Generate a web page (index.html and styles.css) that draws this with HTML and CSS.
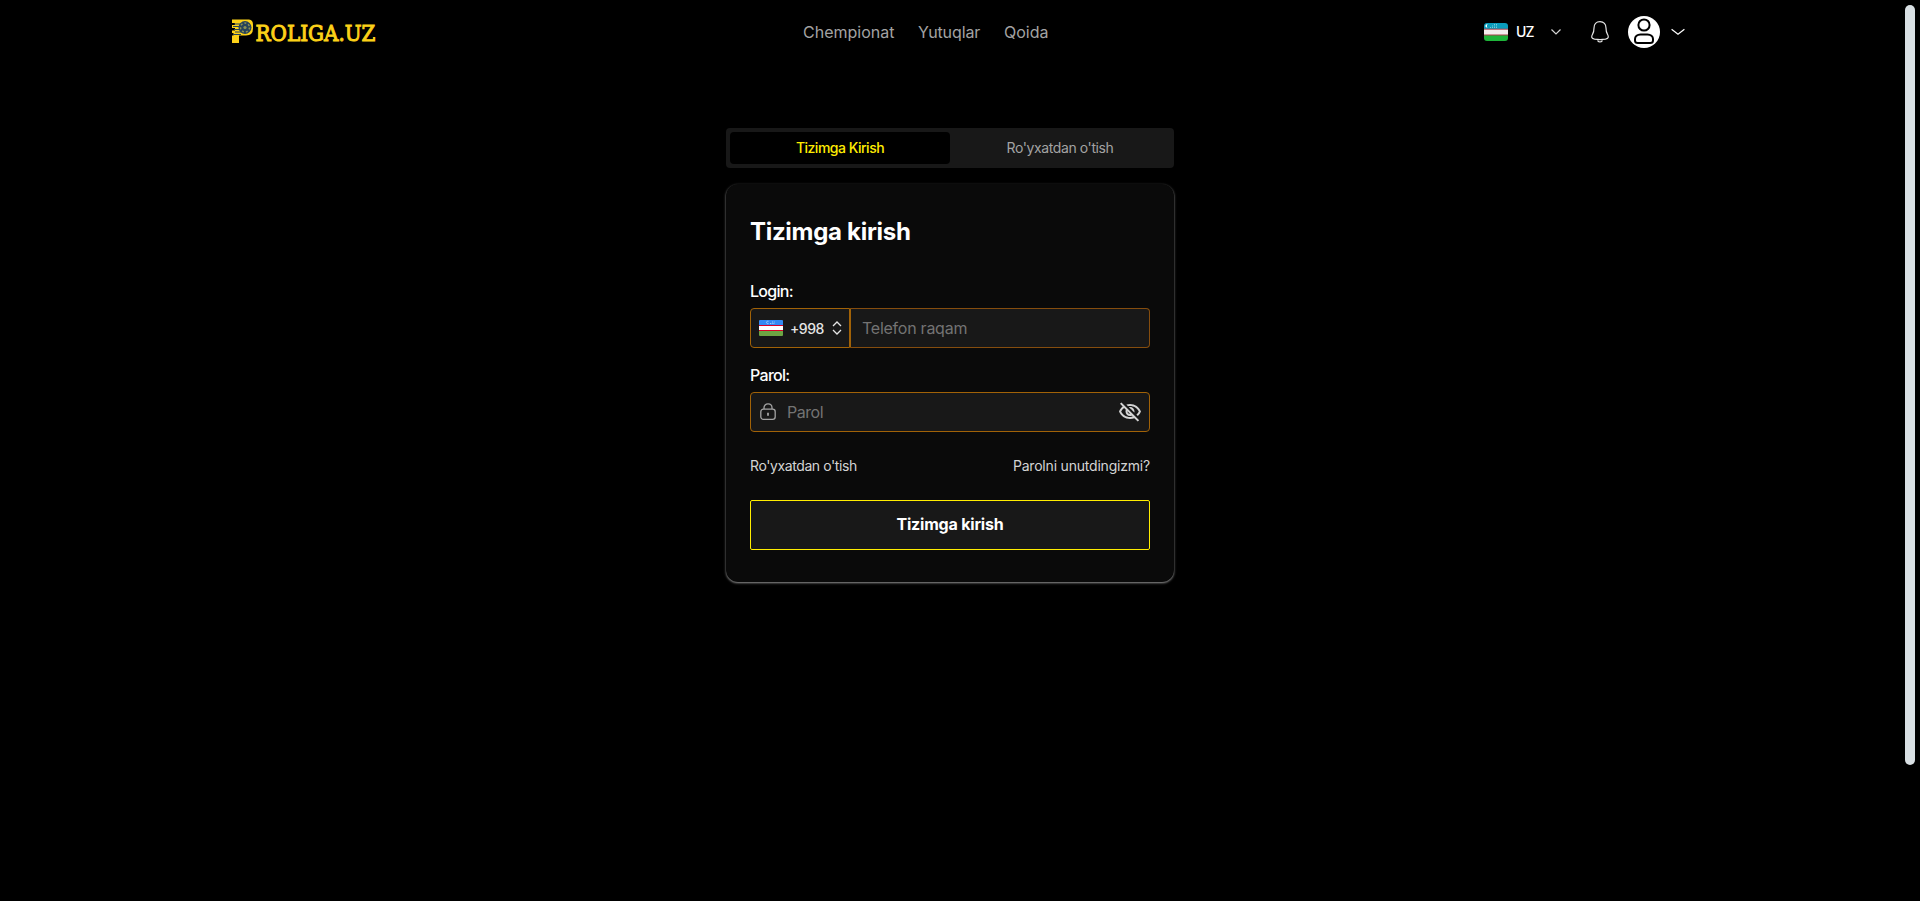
FILE: index.html
```html
<!DOCTYPE html>
<html lang="uz">
<head>
<meta charset="utf-8">
<title>Proliga.uz</title>
<link rel="stylesheet" href="styles.css">
</head>
<body>
<header class="header">
  <a class="brand">
    <svg width="170" height="46" viewBox="0 -10 170 46">
      <path d="M0 .5h17q4 .5 4 5v4q0 7-7 7H7V24H0v-7.500h1.500V14H0v-2.500h3V9H0V6h3V4H0Z" fill="#fcd118"/>
      <path d="M2 5h8M1 7.500h6M2 10.500h6M3 13h8M1 15.500h8" stroke="#26435a" stroke-width="1"/>
      <circle cx="13" cy="8.500" r="6.500" fill="#26435a"/>
      <circle cx="13" cy="8.500" r="4.500" fill="none" stroke="#8c9150" stroke-width="1.500" stroke-dasharray="2 2"/>
      <circle cx="13" cy="8.500" r="1.600" fill="#8c9150"/>
      <text class="brand-text" x="23.500" y="22.300" textLength="120" lengthAdjust="spacingAndGlyphs">ROLIGA.UZ</text>
    </svg>
  </a>
  <nav class="nav"><a class="n1">Chempionat</a><a class="n2">Yutuqlar</a><a class="n3">Qoida</a></nav>
  <div class="tools">
    <svg class="flag" width="24" height="18" viewBox="0 0 24 18">
      <path d="M0 0h24v6H0Z" fill="#0a9cbb"/><path d="M0 6h24v6.500H0Z" fill="#f4eeee"/><path d="M0 12h24v6H0Z" fill="#1eb53a"/>
      <path d="M0 6.200h24M0 12h24" stroke="#a8404a" stroke-width="1"/>
      <path d="M3.700 1.300a1.700 1.700 0 1 0 0 3.200 2 2 0 0 1 0-3.200Z" fill="#fff"/>
      <path d="M6 4.500h8M8 3h6M10 1.500h4" stroke="#8fd5e2" stroke-width=".8" stroke-dasharray="1 1"/>
    </svg>
    <span class="lang">UZ</span>
    <svg class="chev" width="10" height="6" viewBox="0 0 10 6"><path d="M.5.500l4.500 4.500L9.500.500"/></svg>
    <svg class="bell" width="20" height="24" viewBox="0 0 20 24"><path d="M10 1.700c-3.800 0-6 2.500-6 6.300 0 3.500-.4 4.600-1.500 6.300C1 17 1.500 18.700 4.500 19.200q5.500.7 11 0c3-.5 3.500-2.200 2-4.900C16.400 12.600 16 11.500 16 8c0-3.800-2.200-6.300-6-6.300Z"/><path d="M7.500 20.500q2.500 3 5 0"/></svg>
    <svg class="avatar" width="32" height="32" viewBox="0 0 32 32"><circle class="disc" cx="16" cy="16" r="16"/><circle cx="16" cy="9" r="5.600"/><path d="M12.500 18.500h7c3.200 0 5.500 2 5.500 4.600v1.400c0 1.800-1 2.500-2.800 2.500H9.800C8 27 7 26.300 7 24.500v-1.400c0-2.600 2.300-4.600 5.500-4.600Z"/></svg>
    <svg class="chev chev-lg" width="14" height="8" viewBox="0 0 14 8"><path d="M.6 1.200l6.400 5 6.400-5"/></svg>
  </div>
</header>
<main class="main">
  <div class="tabs">
    <div class="tab active"><span class="t1">Tizimga Kirish</span></div>
    <div class="tab"><span class="t2">Ro'yxatdan o'tish</span></div>
  </div>
  <form class="card">
    <h1 class="title">Tizimga kirish</h1>
    <label class="label l1">Login:</label>
    <div class="phone">
      <div class="code">
        <svg class="flag2" width="24" height="16" viewBox="0 0 24 16"><path d="M0 0h24v5H0Z" fill="#338af3"/><path d="M0 5h24v6H0Z" fill="#d80027"/><path d="M0 6h24v4H0Z" fill="#fff"/><path d="M0 11h24v5H0Z" fill="#6da544"/><path d="M9.500 1.300a1.300 1.300 0 1 0 0 2.300" fill="none" stroke="#b9dafc" stroke-width=".8"/><path d="M11 3.500h5M13 2h3" stroke="#b9dafc" stroke-width=".8" stroke-dasharray="1 .7"/></svg>
        <span class="dial">+998</span>
        <svg class="sort" width="10" height="14" viewBox="0 0 10 14"><path d="M1 5l4-4 4 4M1 9l4 4 4-4"/></svg>
      </div>
      <div class="number"><span class="ph p1">Telefon raqam</span></div>
    </div>
    <label class="label l2">Parol:</label>
    <div class="password">
      <svg class="lock" width="16" height="18" viewBox="0 0 16 18"><rect x=".8" y="6.200" width="14.400" height="10.200" rx="2.600"/><path d="M4 6V4.800C4 2.400 5.600.9 8 .9s4 1.500 4 3.900V6"/><path d="M8 9.800v3" stroke-width="1.800"/></svg>
      <span class="ph p2">Parol</span>
      <svg class="eye" width="24" height="24" viewBox="0 0 24 24"><path d="M12 6c3.790 0 7.170 2.130 8.820 5.500-.59 1.220-1.420 2.270-2.410 3.120l1.410 1.410c1.390-1.230 2.490-2.770 3.180-4.530C21.270 7.110 17 4 12 4c-1.270 0-2.490.2-3.640.57l1.650 1.650C10.660 6.090 11.320 6 12 6zm-1.070 1.140L13 9.210c.57.250 1.030.710 1.280 1.280l2.070 2.070c.080-.34.140-.7.140-1.070C16.500 9.010 14.480 7 12 7c-.37 0-.72.050-1.070.14zM2.010 3.870l2.680 2.680C3.060 7.830 1.770 9.530 1 11.500 2.730 15.890 7 19 12 19c1.520 0 2.980-.29 4.320-.82l3.420 3.420 1.410-1.410L3.420 2.450 2.010 3.870zm7.500 7.500l2.610 2.610c-.04.010-.08.020-.12.020-1.380 0-2.500-1.120-2.500-2.500 0-.05.010-.08.010-.13zm-3.400-3.400l1.750 1.750c-.23.550-.36 1.150-.36 1.780 0 2.480 2.020 4.500 4.500 4.500.63 0 1.230-.13 1.770-.36l.98.980c-.88.240-1.800.380-2.750.380-3.790 0-7.170-2.130-8.820-5.500.7-1.430 1.720-2.610 2.930-3.530z"/></svg>
    </div>
    <div class="links"><a class="k1">Ro'yxatdan o'tish</a><a class="k2">Parolni unutdingizmi?</a></div>
    <button class="submit" type="button">Tizimga kirish</button>
  </form>
</main>
<div class="scrollbar"></div>
</body>
</html>
```

FILE: styles.css
```css
* { box-sizing: border-box; }
body { margin: 0; height: 901px; padding-right: 20px; overflow: hidden; background: #000; color: #fff; font-family: "Inter", "Liberation Sans", sans-serif; }
svg { display: block; flex: none; }
span, a { white-space: nowrap; }
.header { height: 64px; display: grid; grid-template-columns: 571px 1fr auto; align-items: center; padding: 0 215px 0 232px; }
.brand svg { overflow: visible; }
.brand-text { font: 400 22px "DejaVu Serif", serif; fill: #fcd118; stroke: #fcd118; stroke-width: 1; }
.nav { display: flex; gap: 24px; margin-top: -1px; color: #a3a3a3; font-size: 16px; line-height: 24px; }
.n1 { width: 91px; }
.n2 { width: 62px; letter-spacing: -.1px; }
.tools { display: flex; align-items: center; }
.flag { border-radius: 3px; }
.lang { width: 20px; margin-left: 8px; font-size: 14px; font-weight: 500; line-height: 24px; letter-spacing: -.8px; }
.chev { margin-left: 15px; fill: none; stroke: #d4d4d4; stroke-width: 1.200; }
.bell { margin-left: 29px; fill: none; stroke: #e5e5e5; stroke-width: 1.200; }
.avatar { margin-left: 18px; fill: none; stroke: #000; stroke-width: 2; }
.disc { fill: #fff; stroke: none; }
.chev-lg { margin-left: 11px; stroke: #fff; }
.main { width: 448px; margin: 64px auto 0; }
.tabs { height: 40px; display: flex; padding: 4px; background: #181818; border-radius: 4px; }
.tab { flex: 1; display: flex; align-items: center; justify-content: center; padding-bottom: 1px; border-radius: 4px; color: #a3a3a3; font-size: 14px; letter-spacing: -.4px; }
.active { background: #000; color: #ffed00; font-weight: 500; letter-spacing: -.5px; }
.card { height: 398px; margin-top: 16px; padding: 24px; display: flex; flex-direction: column; background: #0a0a0a; border-radius: 12px; box-shadow: 0 1px 3px rgba(255,255,255,.3), 0 1px 2px rgba(255,255,255,.35); }
.title { margin: 8px 0 0; font-size: 24px; line-height: 32px; font-weight: 700; letter-spacing: -.3px; }
.label { font-size: 16px; line-height: 24px; font-weight: 500; letter-spacing: -.7px; }
.l1 { margin-top: 31px; }
.l2 { margin-top: 15px; }
.phone { display: flex; height: 40px; margin-top: 5px; }
.code { width: 100px; display: flex; align-items: center; padding-left: 8px; border: 1px solid #a16207; border-radius: 4px 0 0 4px; background: #181818; }
.flag2 { border-radius: 1px; }
.dial { width: 34px; margin: 0 8px 0 7px; font-size: 14px; font-weight: 500; color: #e5e5e5; letter-spacing: -.5px; }
.sort { fill: none; stroke: #e5e5e5; stroke-width: 1.300; }
.number { flex: 1; display: flex; align-items: center; padding-left: 11px; border: 1px solid #854d0e; border-left-color: #a16207; border-radius: 0 4px 4px 0; background: #181818; }
.ph { color: #737373; font-size: 16px; line-height: 24px; letter-spacing: -.25px; }
.password { display: flex; align-items: center; height: 40px; margin-top: 5px; padding: 0 7px 0 9px; border: 1px solid #a16207; border-radius: 4px; background: #181818; }
.lock { fill: none; stroke: #a3a3a3; stroke-width: 1.300; }
.p2 { margin-left: 11px; letter-spacing: -.45px; }
.eye { margin-left: auto; fill: #d4d4d4; }
.links { display: flex; justify-content: space-between; margin-top: 24px; color: #d4d4d4; font-size: 14px; line-height: 20px; }
.k1 { letter-spacing: -.4px; }
.k2 { letter-spacing: -.2px; }
.submit { height: 50px; margin-top: 24px; padding: 0 0 2px; border: 1px solid #ffed00; border-radius: 2px; background: #181818; color: #fff; font: 700 16px "Inter", "Liberation Sans", sans-serif; letter-spacing: -.2px; }
.scrollbar { position: absolute; left: 1905px; top: 5px; width: 10px; height: 760px; border-radius: 5px; background: #d9e0e4; }
```
